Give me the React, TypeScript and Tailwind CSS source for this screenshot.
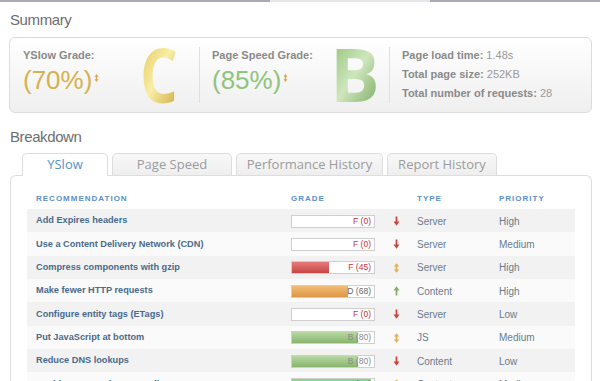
import React from "react";

type Arrow = "down" | "up" | "both";
type Row = { r: string; g: string; s: number; a: Arrow; t: string; p: string };

const rows: Row[] = [
  { r: "Add Expires headers", g: "F", s: 0, a: "down", t: "Server", p: "High" },
  { r: "Use a Content Delivery Network (CDN)", g: "F", s: 0, a: "down", t: "Server", p: "Medium" },
  { r: "Compress components with gzip", g: "F", s: 45, a: "both", t: "Server", p: "High" },
  { r: "Make fewer HTTP requests", g: "D", s: 68, a: "up", t: "Content", p: "High" },
  { r: "Configure entity tags (ETags)", g: "F", s: 0, a: "down", t: "Server", p: "Low" },
  { r: "Put JavaScript at bottom", g: "B", s: 80, a: "both", t: "JS", p: "Medium" },
  { r: "Reduce DNS lookups", g: "B", s: 80, a: "down", t: "Content", p: "Low" },
  { r: "Avoid HTTP 404 (Not Found) error", g: "A", s: 96, a: "both", t: "Content", p: "Medium" },
];

function fillClass(g: string) {
  if (g === "F") return "bg-linear-to-b from-[#e57a7a] to-[#c84444]";
  if (g === "D") return "bg-linear-to-b from-[#f2bd76] to-[#dd9645]";
  if (g === "B") return "bg-linear-to-b from-[#b9d8a2] to-[#88b56e]";
  return "bg-linear-to-b from-[#86dd8a] to-[#5cc465]";
}
function textClass(g: string) {
  if (g === "F") return "text-[#cc3333]";
  if (g === "D") return "text-[#666]";
  if (g === "B") return "text-[#888]";
  return "text-[#555]";
}

function ArrowIcon({ a }: { a: Arrow }) {
  if (a === "down")
    return (
      <svg width="7" height="10" viewBox="0 0 7 10">
        <path d="M3.5 0.5 V7" stroke="#c9463f" strokeWidth="1.8" />
        <path d="M0.5 5.5 L3.5 9.8 L6.5 5.5 Z" fill="#c9463f" />
      </svg>
    );
  if (a === "up")
    return (
      <svg width="7" height="10" viewBox="0 0 7 10">
        <path d="M3.5 3 V9.5" stroke="#7fb068" strokeWidth="1.8" />
        <path d="M0.5 4.5 L3.5 0.2 L6.5 4.5 Z" fill="#7fb068" />
      </svg>
    );
  return (
    <svg width="7" height="10" viewBox="0 0 7 10">
      <path d="M3.5 3 V7" stroke="#e9ad55" strokeWidth="1.8" />
      <path d="M0.8 3.6 L3.5 0.2 L6.2 3.6 Z" fill="#e9ad55" />
      <path d="M0.8 6.4 L3.5 9.8 L6.2 6.4 Z" fill="#e9ad55" />
    </svg>
  );
}

function SmallBoth() {
  return (
    <svg width="5" height="8" viewBox="0 0 5 8" className="ml-[2px] mt-[9px]">
      <path d="M2.5 2 V6" stroke="#e3a24a" strokeWidth="1.4" />
      <path d="M0.5 2.8 L2.5 0 L4.5 2.8 Z" fill="#e3a24a" />
      <path d="M0.5 5.2 L2.5 8 L4.5 5.2 Z" fill="#e3a24a" />
    </svg>
  );
}

export default function App() {
  return (
    <div className="w-[600px] h-[381px] overflow-hidden bg-white font-['Liberation_Sans',Arial,sans-serif]">
      {/* top line */}
      <div className="flex h-[2px]">
        <div className="w-[270px] bg-[#a9a9b5]" />
        <div className="w-[160px] bg-[#e6e6ea]" />
        <div className="flex-1 bg-[#a9a9b5]" />
      </div>

      {/* Summary */}
      <div className="pl-[10px] pt-[9px] h-[35px] text-[15px] leading-[18px] tracking-[-0.4px] text-[#6e6e6e]">
        Summary
      </div>
      <div className="mx-[9px] w-[583px] h-[76px] rounded-[6px] border border-[#dcdcdc] bg-linear-to-b from-white to-[#efefef] flex">
        {/* YSlow */}
        <div className="w-[189px] flex pl-[13px]">
          <div className="w-[117px] pt-[11px]">
            <div className="text-[11px] leading-[13px] font-bold text-[#8a8a8a]">YSlow Grade:</div>
            <div className="flex mt-[3px]">
              <span className="text-[26px] leading-[30px] text-[#d6b14e]">(70%)</span>
              <SmallBoth />
            </div>
          </div>
          <div className="self-center -mt-[2px]">
            <span className="inline-block font-['Open_Sans',sans-serif] font-bold text-[76px] leading-[76px] scale-x-[0.78] origin-left bg-linear-to-br from-[#e2c250] via-[#f8eea6] to-[#cfa634] bg-clip-text text-transparent">
              C
            </span>
          </div>
        </div>
        <div className="w-px bg-[#e0e0e0] my-[9px]" />
        {/* Page Speed */}
        <div className="w-[189px] flex pl-[12px]">
          <div className="w-[118px] pt-[11px]">
            <div className="text-[11px] leading-[13px] font-bold text-[#8a8a8a]">Page Speed Grade:</div>
            <div className="flex mt-[3px]">
              <span className="text-[26px] leading-[30px] text-[#8fc47e]">(85%)</span>
              <SmallBoth />
            </div>
          </div>
          <div className="self-center -mt-[2px]">
            <span className="inline-block font-['Open_Sans',sans-serif] font-bold text-[74px] leading-[76px] bg-linear-to-br from-[#8dbf73] via-[#cfe6bd] to-[#72a456] bg-clip-text text-transparent">
              B
            </span>
          </div>
        </div>
        <div className="w-px bg-[#e0e0e0] my-[9px]" />
        {/* Stats */}
        <div className="flex-1 pl-[12px] pt-[8px] text-[11px] leading-[19px]">
          <div>
            <span className="font-bold text-[#8a8a8a]">Page load time:</span>{" "}
            <span className="text-[#9a9a9a]">1.48s</span>
          </div>
          <div>
            <span className="font-bold text-[#8a8a8a]">Total page size:</span>{" "}
            <span className="text-[#9a9a9a]">252KB</span>
          </div>
          <div>
            <span className="font-bold text-[#8a8a8a]">Total number of requests:</span>{" "}
            <span className="text-[#9a9a9a]">28</span>
          </div>
        </div>
      </div>

      {/* Breakdown */}
      <div className="pl-[10px] pt-[15px] h-[40px] text-[15px] leading-[18px] tracking-[-0.4px] text-[#6e6e6e]">
        Breakdown
      </div>

      <div className="ml-[10px] w-[582px]">
        <div className="flex gap-[4px] pl-[12px] relative z-10 font-['Open_Sans',sans-serif] text-[13px]">
          <div className="w-[86px] h-[23px] -mb-px rounded-t-[5px] border border-b-0 border-[#dddddd] bg-white flex items-center justify-center text-[#5a8fc9]">
            YSlow
          </div>
          <div className="w-[120px] h-[22px] rounded-t-[5px] border border-b-0 border-[#dddddd] bg-linear-to-b from-[#f8f8f8] to-[#eeeeee] flex items-center justify-center text-[#9c9c9c]">
            Page Speed
          </div>
          <div className="w-[147px] h-[22px] rounded-t-[5px] border border-b-0 border-[#dddddd] bg-linear-to-b from-[#f8f8f8] to-[#eeeeee] flex items-center justify-center text-[#9c9c9c]">
            Performance History
          </div>
          <div className="w-[110px] h-[22px] rounded-t-[5px] border border-b-0 border-[#dddddd] bg-linear-to-b from-[#f8f8f8] to-[#eeeeee] flex items-center justify-center text-[#9c9c9c]">
            Report History
          </div>
        </div>
        <div className="rounded-t-[6px] border border-b-0 border-[#dddddd] bg-white px-[16px] h-[220px]">
          <div className="flex items-end h-[33px] pb-[5px] text-[8px] leading-[10px] font-bold tracking-[1px] text-[#5b8fc7]">
            <div className="w-[264px] pl-[9px]">RECOMMENDATION</div>
            <div className="w-[126px]">GRADE</div>
            <div className="w-[82px]">TYPE</div>
            <div className="flex-1">PRIORITY</div>
          </div>
          {rows.map((row, i) => (
            <div
              key={i}
              className={`flex items-center h-[23.33px] pt-[1px] ${i % 2 === 0 ? "bg-[#f2f2f2]" : "bg-[#fafafa]"}`}
            >
              <div className="w-[264px] pl-[9px] text-[9.2px] font-bold text-[#4a6a8b] whitespace-nowrap">
                {row.r}
              </div>
              <div className="w-[102px] flex">
                <div className="relative w-[84px] h-[13px] border border-[#cfcfcf] bg-white">
                  <div
                    className={`absolute left-0 top-0 bottom-0 ${fillClass(row.g)}`}
                    style={{ width: `${row.s}%` }}
                  />
                  <div
                    className={`absolute right-[3px] top-0 bottom-0 flex items-center text-[8.5px] ${textClass(row.g)}`}
                  >
                    {row.g} ({row.s})
                  </div>
                </div>
              </div>
              <div className="w-[24px] flex">
                <ArrowIcon a={row.a} />
              </div>
              <div className="w-[82px] text-[10px] text-[#6b7c8d]">{row.t}</div>
              <div className="flex-1 text-[10px] text-[#6b7c8d]">{row.p}</div>
            </div>
          ))}
        </div>
      </div>
    </div>
  );
}
